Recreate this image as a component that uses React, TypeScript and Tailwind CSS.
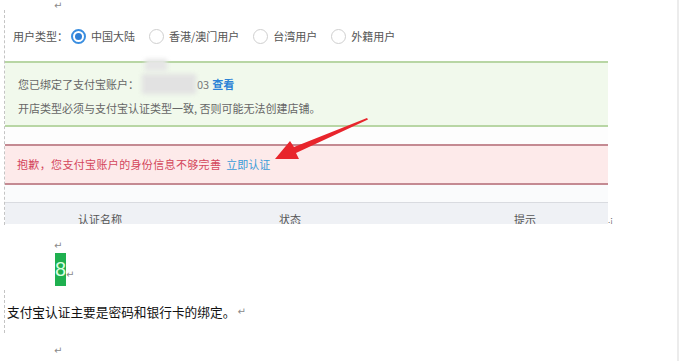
import React from "react";

const Ret = ({ className = "" }: { className?: string }) => (
  <span className={"text-[#8a8a8a] text-[10px] " + className} style={{ fontFamily: "'DejaVu Sans', sans-serif" }}>↵</span>
);

const Radio = ({ checked, label }: { checked?: boolean; label: string }) => (
  <div className="flex items-center gap-[5px]">
    {checked ? (
      <span className="w-[15px] h-[15px] rounded-full border-[2px] border-[#3a8ee0] flex items-center justify-center bg-white">
        <span className="w-[7px] h-[7px] rounded-full bg-[#2f7fd6]" />
      </span>
    ) : (
      <span className="w-[15px] h-[15px] rounded-full border border-[#cfcfcf] bg-white" />
    )}
    <span>{label}</span>
  </div>
);

export default function App() {
  const cjk = { fontFamily: "'Noto Sans CJK SC', 'Noto Sans', sans-serif" };
  return (
    <div className="w-[679px] h-[361px] relative overflow-hidden bg-white border-r-2 border-[#ececec]" style={cjk}>
      {/* dashed text boundary */}
      <div className="absolute left-[4px] top-[10px] h-[215px] border-l border-dashed border-[#c4c4c4]" />
      <div className="absolute left-[4px] top-[290px] h-[43px] border-l border-dashed border-[#c4c4c4]" />

      <div className="h-[12px] pl-[54px] leading-[6px] -mt-[1px]">
        <Ret />
      </div>

      {/* embedded screenshot */}
      <div className="ml-[5px] w-[603px] h-[213px] relative overflow-hidden flex flex-col bg-white">
        <div className="h-[50px] shrink-0 flex items-center pl-[8px] text-[11px] text-[#555]">
          <span className="mr-[3px]">用户类型：</span>
          <div className="flex items-center gap-[14px]">
            <Radio checked label="中国大陆" />
            <Radio label="香港/澳门用户" />
            <Radio label="台湾用户" />
            <Radio label="外籍用户" />
          </div>
        </div>

        <div className="h-[66px] shrink-0 border-y-2 border-[#b8d6a4] bg-[#f1f9ec] pl-[13px] pt-[11px] text-[11px] text-[#666] relative">
          <div className="h-[20px] flex items-center">
            <span>您已绑定了支付宝账户：</span>
            <span className="w-[54px] h-[20px] ml-[3px] bg-[#e2e2e2] blur-[2px]" />
            <span className="ml-[1px] text-[#777]">03</span>
            <span className="ml-[3px] text-[#2d83d6] font-bold">查看</span>
          </div>
          <div className="h-[20px] mt-[4px] flex items-center">开店类型必须与支付宝认证类型一致, 否则可能无法创建店铺。</div>
          <div className="absolute left-[140px] -top-[4px] w-[22px] h-[12px] bg-[#e6e6e6] blur-[2px]" />
        </div>

        <div className="h-[17px] shrink-0 bg-[#fdfdfd]" />

        <div className="h-[41px] shrink-0 border-y-2 border-[#c48a92] bg-[#fdeaea] pl-[12px] flex items-center text-[11px]">
          <span className="text-[#d4475c] tracking-[0.35px]">抱歉，您支付宝账户的身份信息不够完善</span>
          <span className="ml-[5px] text-[#3a9bd8]">立即认证</span>
        </div>

        <div className="h-[17px] shrink-0 bg-[#fafbfc]" />

        <div className="flex-1 border-t border-[#d9dbe0] bg-[#eff1f5] flex text-[11px] leading-[14px] text-[#555] pt-[9px] overflow-hidden">
          <div className="w-[190px] shrink-0 text-center">认证名称</div>
          <div className="w-[190px] shrink-0 text-center">状态</div>
          <div className="w-[280px] shrink-0 text-center">提示</div>
        </div>

        <svg className="absolute left-0 top-0" width="603" height="213" viewBox="0 0 603 213">
          <polygon
            points="270,148 294,148 291,142 363,108.5 362,107 289,136 285,130"
            fill="#e8252c"
          />
        </svg>
      </div>

      <div className="absolute left-[608px] top-[216px] text-[8px] text-[#666] leading-[8px]">.¡</div>

      <div className="mt-[8px] h-[20px] leading-[20px] pl-[54px]">
        <Ret />
      </div>
      <div className="h-[34px] pl-[55px] flex items-end">
        <span className="w-[11px] h-[33px] bg-[#1fb04f] text-[#d9ffe0] text-[20px] leading-[33px] text-center" style={{ fontFamily: "'Liberation Sans', sans-serif" }}>8</span>
        <Ret className="leading-[14px] mb-[4px]" />
      </div>
      <div className="mt-[16px] h-[20px] leading-[20px] pl-[7px] text-[12.7px] text-[#111] flex items-center">
        <span>支付宝认证主要是密码和银行卡的绑定。</span>
        <Ret className="ml-[2px]" />
      </div>
      <div className="mt-[15px] h-[20px] leading-[20px] pl-[54px]">
        <Ret />
      </div>
    </div>
  );
}
